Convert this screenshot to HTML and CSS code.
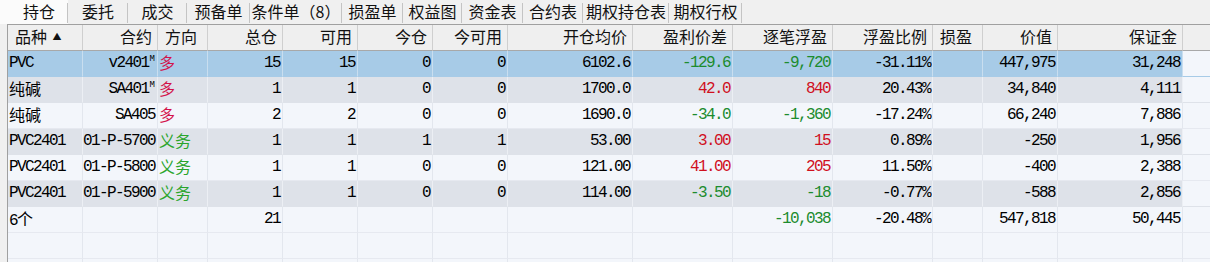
FILE: index.html
```html
<!DOCTYPE html>
<html lang="zh-CN">
<head>
<meta charset="utf-8">
<title>持仓</title>
<link rel="stylesheet" href="styles.css">
</head>
<body>
<div class="tabs">
  <div class="tab active">持仓</div>
  <div class="tab">委托</div>
  <div class="tab">成交</div>
  <div class="tab">预备单</div>
  <div class="tab">条件单（8）</div>
  <div class="tab">损盈单</div>
  <div class="tab">权益图</div>
  <div class="tab">资金表</div>
  <div class="tab">合约表</div>
  <div class="tab">期权持仓表</div>
  <div class="tab">期权行权</div>
</div>
<div class="table">
  <div class="row head">
    <div class="c l">品种 <span class="sort">▲</span></div>
    <div class="c r">合约</div>
    <div class="c l">方向</div>
    <div class="c r">总仓</div>
    <div class="c r">可用</div>
    <div class="c r">今仓</div>
    <div class="c r">今可用</div>
    <div class="c r">开仓均价</div>
    <div class="c r">盈利价差</div>
    <div class="c r">逐笔浮盈</div>
    <div class="c r">浮盈比例</div>
    <div class="c l">损盈</div>
    <div class="c r">价值</div>
    <div class="c r">保证金</div>
    <div class="c f"></div>
  </div>
  <div class="row sel">
    <div class="c l n">PVC</div>
    <div class="c r n">v2401<sup class="m">M</sup></div>
    <div class="c l cj red">多</div>
    <div class="c r n">15</div>
    <div class="c r n">15</div>
    <div class="c r n">0</div>
    <div class="c r n">0</div>
    <div class="c r n">6102.6</div>
    <div class="c r n green">-129.6</div>
    <div class="c r n green">-9,720</div>
    <div class="c r n">-31.11%</div>
    <div class="c"></div>
    <div class="c r n">447,975</div>
    <div class="c r n">31,248</div>
    <div class="c f"></div>
  </div>
  <div class="row gray">
    <div class="c l cj">纯碱</div>
    <div class="c r n">SA401<sup class="m">M</sup></div>
    <div class="c l cj red">多</div>
    <div class="c r n">1</div>
    <div class="c r n">1</div>
    <div class="c r n">0</div>
    <div class="c r n">0</div>
    <div class="c r n">1700.0</div>
    <div class="c r n nred">42.0</div>
    <div class="c r n nred">840</div>
    <div class="c r n">20.43%</div>
    <div class="c"></div>
    <div class="c r n">34,840</div>
    <div class="c r n">4,111</div>
    <div class="c f"></div>
  </div>
  <div class="row light">
    <div class="c l cj">纯碱</div>
    <div class="c r n">SA405</div>
    <div class="c l cj red">多</div>
    <div class="c r n">2</div>
    <div class="c r n">2</div>
    <div class="c r n">0</div>
    <div class="c r n">0</div>
    <div class="c r n">1690.0</div>
    <div class="c r n green">-34.0</div>
    <div class="c r n green">-1,360</div>
    <div class="c r n">-17.24%</div>
    <div class="c"></div>
    <div class="c r n">66,240</div>
    <div class="c r n">7,886</div>
    <div class="c f"></div>
  </div>
  <div class="row gray">
    <div class="c l n">PVC2401</div>
    <div class="c r n">01-P-5700</div>
    <div class="c l cj lgreen">义务</div>
    <div class="c r n">1</div>
    <div class="c r n">1</div>
    <div class="c r n">1</div>
    <div class="c r n">1</div>
    <div class="c r n">53.00</div>
    <div class="c r n nred">3.00</div>
    <div class="c r n nred">15</div>
    <div class="c r n">0.89%</div>
    <div class="c"></div>
    <div class="c r n">-250</div>
    <div class="c r n">1,956</div>
    <div class="c f"></div>
  </div>
  <div class="row light">
    <div class="c l n">PVC2401</div>
    <div class="c r n">01-P-5800</div>
    <div class="c l cj lgreen">义务</div>
    <div class="c r n">1</div>
    <div class="c r n">1</div>
    <div class="c r n">0</div>
    <div class="c r n">0</div>
    <div class="c r n">121.00</div>
    <div class="c r n nred">41.00</div>
    <div class="c r n nred">205</div>
    <div class="c r n">11.50%</div>
    <div class="c"></div>
    <div class="c r n">-400</div>
    <div class="c r n">2,388</div>
    <div class="c f"></div>
  </div>
  <div class="row gray">
    <div class="c l n">PVC2401</div>
    <div class="c r n">01-P-5900</div>
    <div class="c l cj lgreen">义务</div>
    <div class="c r n">1</div>
    <div class="c r n">1</div>
    <div class="c r n">0</div>
    <div class="c r n">0</div>
    <div class="c r n">114.00</div>
    <div class="c r n green">-3.50</div>
    <div class="c r n green">-18</div>
    <div class="c r n">-0.77%</div>
    <div class="c"></div>
    <div class="c r n">-588</div>
    <div class="c r n">2,856</div>
    <div class="c f"></div>
  </div>
  <div class="row light">
    <div class="c l cj"><span class="n">6</span>个</div>
    <div class="c"></div>
    <div class="c"></div>
    <div class="c r n">21</div>
    <div class="c"></div>
    <div class="c"></div>
    <div class="c"></div>
    <div class="c"></div>
    <div class="c"></div>
    <div class="c r n green">-10,038</div>
    <div class="c r n">-20.48%</div>
    <div class="c"></div>
    <div class="c r n">547,818</div>
    <div class="c r n">50,445</div>
    <div class="c f"></div>
  </div>
  <div class="row light">
    <div class="c"></div><div class="c"></div><div class="c"></div><div class="c"></div><div class="c"></div>
    <div class="c"></div><div class="c"></div><div class="c"></div><div class="c"></div><div class="c"></div>
    <div class="c"></div><div class="c"></div><div class="c"></div><div class="c"></div><div class="c f"></div>
  </div>
  <div class="row light">
    <div class="c"></div><div class="c"></div><div class="c"></div><div class="c"></div><div class="c"></div>
    <div class="c"></div><div class="c"></div><div class="c"></div><div class="c"></div><div class="c"></div>
    <div class="c"></div><div class="c"></div><div class="c"></div><div class="c"></div><div class="c f"></div>
  </div>
</div>
</body>
</html>
```

FILE: styles.css
```css
html, body {
  margin: 0;
  padding: 0;
  background: #f0f0f0;
  overflow: hidden;
}
body {
  width: 1210px;
  height: 262px;
  font-family: "Noto Sans CJK SC", "Noto Sans", sans-serif;
  font-size: 16px;
  color: #000;
}
.tabs {
  display: grid;
  grid-template-columns: 68px 60px 59px 63px 92px 61px 59px 61px 60px 86px 73px;
  height: 24px;
  background: #f0f0f0;
}
.tab {
  height: 24px;
  line-height: 22px;
  text-align: center;
  font-size: 16px;
  color: #111;
  position: relative;
  white-space: nowrap;
}
.tab::after {
  content: "";
  position: absolute;
  right: 0;
  top: 3px;
  bottom: 1px;
  width: 1px;
  background: #c4c4c4;
}
.tab.active {
  background: #fbfbfb;
  padding-left: 10px;
}
.table {
  margin-left: 7px;
  border-left: 1px solid #a0a0a0;
  border-top: 1px solid #a0a0a0;
  background: #f3f6fb;
  height: 237px;
  overflow: hidden;
}
.row {
  display: grid;
  grid-template-columns: 75px 75px 50px 75px 75px 75px 75px 125px 100px 100px 100px 50px 75px 125px 1fr;
}
.c {
  height: 25px;
  line-height: 25px;
  border-right: 1px solid #e3e7ee;
  border-bottom: 1px solid #e6e9f0;
  white-space: nowrap;
  overflow: hidden;
  box-sizing: content-box;
}
.c.f {
  border-right: none;
}
.l { text-align: left; padding-left: 1px; }
.r { text-align: right; padding-right: 2px; }
.cj { line-height: 23px; }
.head .c {
  background: #efefef;
  height: 25px;
  line-height: 23px;
  border-bottom: 1px solid #a8a8a8;
  border-right: 1px solid #cfcfcf;
  color: #111;
}
.head .l { padding-left: 7px; }
.head .r { padding-right: 5px; }
.head .c.f { border-right: none; }
.sort {
  font-size: 9px;
  vertical-align: 3px;
  margin-left: 2px;
}
.n {
  font-family: "Liberation Mono", "Courier New", monospace;
  font-size: 16px;
  letter-spacing: -1.6px;
}
.cj .n { line-height: 23px; }
.m {
  font-family: "Liberation Mono", monospace;
  font-size: 9px;
  letter-spacing: 0;
  vertical-align: 6px;
  line-height: 0;
  margin-left: 1px;
}
.sel .c { background: #a7cbe7; border-right-color: #c9deef; border-bottom-color: #a7cbe7; }
.sel .c.f { background: #f3f6fb; }
.gray .c { background: #dee2e9; border-right-color: #eceff4; border-bottom-color: #dee2e9; }
.gray .c.f { background: #f3f6fb; }
.light .c { background: #f3f6fb; }
.red { color: #d3124a; }
.nred { color: #d0101e; }
.green { color: #1c8c2e; }
.lgreen { color: #2aa52c; }
```
